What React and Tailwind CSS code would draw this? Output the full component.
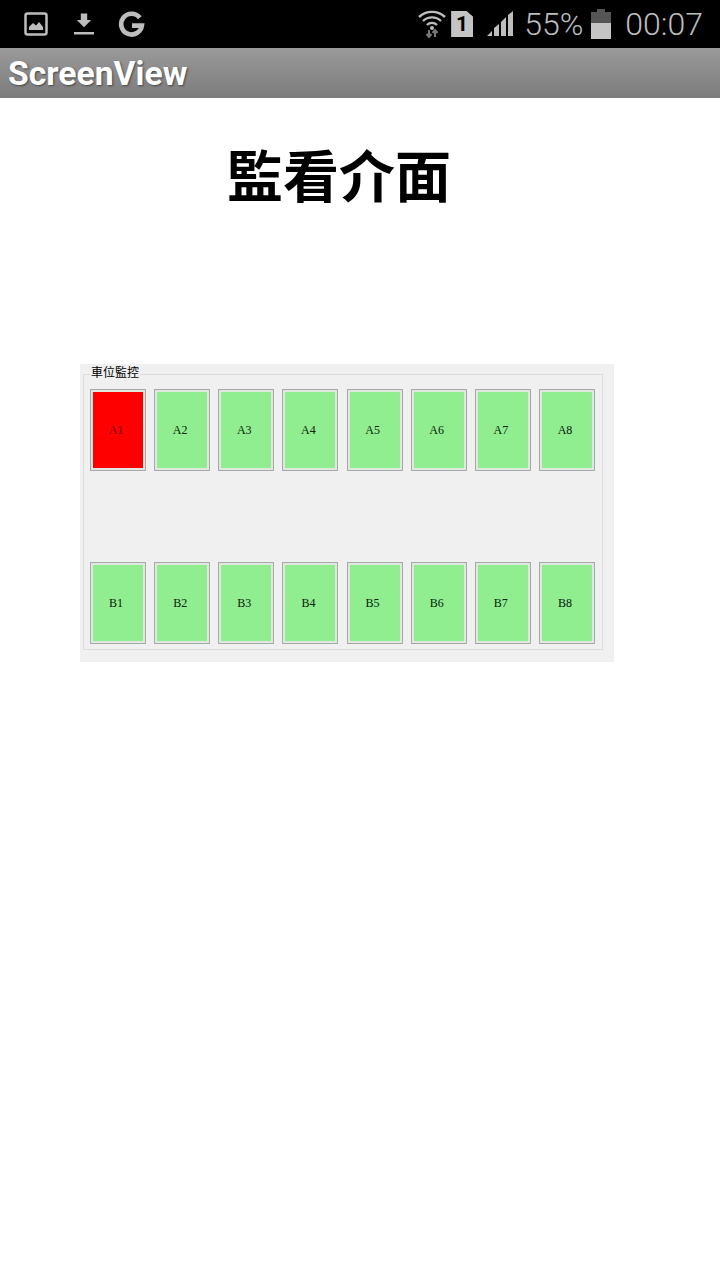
const rowA = ['A1', 'A2', 'A3', 'A4', 'A5', 'A6', 'A7', 'A8'];
const rowB = ['B1', 'B2', 'B3', 'B4', 'B5', 'B6', 'B7', 'B8'];

function Slot({ label, taken }) {
  return (
    <div className="h-[82px] w-[56px] border border-[#a9a9a9] bg-[#dfe8df] p-[2px]">
      <div
        className={`flex h-full w-full items-center justify-center pr-[4px] text-[12px] font-['Liberation_Serif',serif] ${
          taken ? 'bg-[#ff0000] text-[#7a0000]' : 'bg-[#90ee90] text-[#0a200a]'
        }`}
      >
        {label}
      </div>
    </div>
  );
}

function StatusBar() {
  return (
    <div className="flex h-[48px] items-center justify-between bg-black pl-[24px] pr-[17px] text-[#bdbdbd]">
      <div className="flex items-center gap-[24px]">
        <svg width="24" height="24" viewBox="0 0 24 24">
          <rect x="1.5" y="1.5" width="21" height="21" rx="2" fill="none" stroke="#bdbdbd" strokeWidth="2.5" />
          <path d="M5 18v-3l4-4 3 2.500 3-3.500 4 5v3z" fill="#bdbdbd" />
        </svg>
        <svg width="24" height="24" viewBox="0 0 24 24">
          <path d="M8 2h8v8h5l-9 9-9-9h5z" transform="translate(2.4 0) scale(0.8)" fill="#bdbdbd" />
          <rect x="2" y="20" width="20" height="2.5" fill="#bdbdbd" />
        </svg>
        <svg className="-ml-[2px]" width="27" height="27" viewBox="0 0 26 26">
          <path d="M21 6.500A10 10 0 1 0 23 14H13.500" fill="none" stroke="#bdbdbd" strokeWidth="4.500" />
        </svg>
      </div>
      <div className="flex items-center font-['Roboto',sans-serif]">
        <svg width="28" height="30" viewBox="0 0 28 30">
          <path d="M1 8a19 19 0 0 1 26 0M5 12a13 13 0 0 1 18 0M9 16a7 7 0 0 1 10 0" fill="none" stroke="#bdbdbd" strokeWidth="2.400" />
          <circle cx="14" cy="19" r="2" fill="#bdbdbd" />
          <path d="M11 21v7M8.500 25l2.500 3 2.500-3M17 28v-7M14.500 24l2.500-3 2.500 3" fill="none" stroke="#777" strokeWidth="2" />
        </svg>
        <div className="relative ml-[5px] h-[26px] w-[22px] bg-[#c4c4c4] [clip-path:polygon(0_0,70%_0,100%_22%,100%_100%,0_100%)]">
          <span className="absolute inset-0 flex items-center justify-center text-[21px] font-bold leading-none text-black">1</span>
        </div>
        <svg className="ml-[14px]" width="27" height="26" viewBox="0 0 27 26">
          <path d="M0 25l5-5v5zM7 25v-8l5-4v12zM14 25V11l5-5v19zM21 25V4l5-4v25z" fill="#bdbdbd" />
        </svg>
        <span className="ml-[10px] text-[32px] font-light leading-none">55%</span>
        <div className="ml-[8px] flex h-[30px] w-[20px] flex-col items-center">
          <div className="h-[3px] w-[8px] bg-[#555]" />
          <div className="h-[11px] w-full bg-[#555]" />
          <div className="h-[16px] w-full bg-[#c4c4c4]" />
        </div>
        <span className="ml-[14px] text-[32px] font-light leading-none">00:07</span>
      </div>
    </div>
  );
}

export default function App() {
  return (
    <div className="h-[1280px] w-[720px] overflow-hidden bg-white">
      <StatusBar />
      <div className="flex h-[50px] items-center bg-gradient-to-b from-[#9a9a9a] to-[#7c7c7c] pl-[8px] pt-[2px]">
        <span className="text-[33.7px] font-['Roboto',sans-serif] font-bold leading-none text-white [text-shadow:1px_1px_2px_#444]">
          ScreenView
        </span>
      </div>

      <div className="flex h-[266px] justify-center pr-[42px] pt-[40px]">
        <h1 className="text-[56px] font-['Noto_Sans_CJK_TC','Liberation_Sans',sans-serif] font-bold leading-[70px] text-black">
          監看介面
        </h1>
      </div>

      <div className="ml-[80px] h-[298px] w-[534px] bg-[#f0f0f0] pl-[3px] pt-[10px]">
        <div className="relative flex h-[276px] w-[520px] flex-col justify-between border border-[#dcdcdc] pb-[5px] pl-[6px] pr-[7px] pt-[14px]">
          <span className="absolute left-[6px] top-[-11px] bg-[#f0f0f0] px-px text-[12px] leading-[16px] text-black font-['Noto_Sans_CJK_TC',sans-serif]">
            車位監控
          </span>
          <div className="flex justify-between">
            {rowA.map((s, i) => (
              <Slot key={s} label={s} taken={i === 0} />
            ))}
          </div>
          <div className="flex justify-between">
            {rowB.map((s) => (
              <Slot key={s} label={s} />
            ))}
          </div>
        </div>
      </div>
    </div>
  );
}
